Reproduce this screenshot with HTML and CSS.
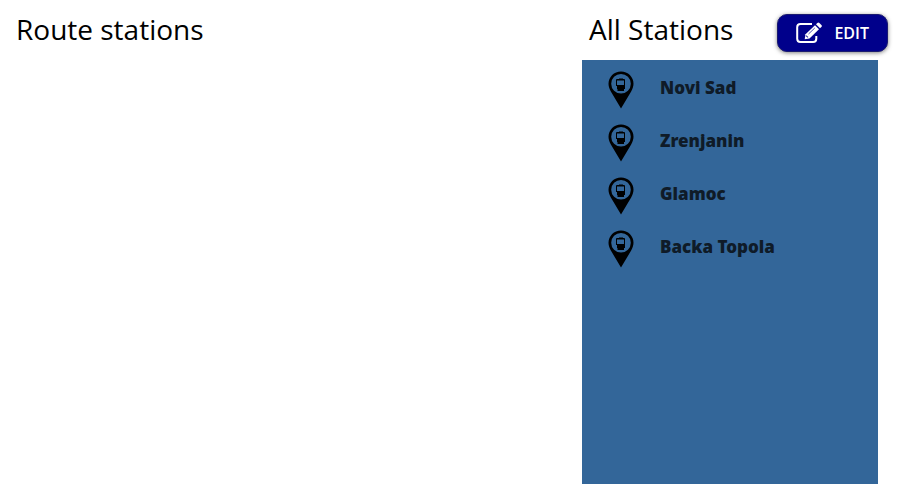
FILE: index.html
```html
<!DOCTYPE html>
<html lang="en">
<head>
<meta charset="utf-8">
<title>Route stations</title>
<link rel="stylesheet" href="styles.css">
</head>
<body>
<svg class="sprite" aria-hidden="true">
  <symbol id="pin" viewBox="0 0 26 38">
    <path fill-rule="evenodd" d="M13 0.5C6 .5.5 6 .5 12.8c0 3 1 5.200 2.500 8L13 37.500l10-16.700c1.500-2.800 2.500-5 2.500-8C25.500 6 20 .5 13 .5zM13 3a9.800 9.800 0 1 1 0 19.600A9.800 9.800 0 0 1 13 3z"/>
    <path d="M11 7h4v.5h-4z"/>
    <path fill-rule="evenodd" d="M9 8h7q1 0 1 1v6H8V9q0-1 1-1zM9 9.500V14h7V9.500z"/>
    <path d="M9 15h8v3h-1v2H9.500v-2H9z"/>
  </symbol>
</svg>
<main class="page">
  <section class="route">
    <h1 class="title">Route stations</h1>
  </section>
  <section class="all">
    <header class="bar">
      <h1 class="title">All Stations</h1>
      <button class="edit" type="button">
        <svg class="edit-icon" viewBox="0 0 26 22" aria-hidden="true">
          <path d="M16 2H4.500Q1.200 2 1.200 5.200v11.600Q1.200 20 4.500 20h12.600q3.200 0 3.200-3.200V14" fill="none" stroke="#fff" stroke-width="2"/>
          <path d="M9.500 12.200 19 3.200l4 4-9.500 9.200-4.800.8z" fill="#fff"/>
          <path d="M20 2.300l1.400-1.400q1-.9 2 0l2 2q.9 1 0 2L24 6.300z" fill="#fff"/>
          <path d="M12.500 12 18.800 6M10.300 13.300v1.200h1.300v1.200" fill="none" stroke="#00008b" stroke-width=".7"/>
        </svg>
        <span>EDIT</span>
      </button>
    </header>
    <ul class="stations">
      <li class="station"><svg class="pin" aria-hidden="true"><use href="#pin"/></svg><span>Novi Sad</span></li>
      <li class="station"><svg class="pin" aria-hidden="true"><use href="#pin"/></svg><span>Zrenjanin</span></li>
      <li class="station"><svg class="pin" aria-hidden="true"><use href="#pin"/></svg><span>Glamoc</span></li>
      <li class="station"><svg class="pin" aria-hidden="true"><use href="#pin"/></svg><span>Backa Topola</span></li>
    </ul>
  </section>
</main>
</body>
</html>
```
FILE: styles.css
```css
* {
  box-sizing: border-box;
}

body {
  margin: 0;
  background: #fff;
  color: #000;
  font-family: "Segoe UI", "Open Sans", "Noto Sans", sans-serif;
}

.sprite {
  display: none;
}

.page {
  display: flex;
  min-height: 100vh;
  padding: 8px 13px 14px 16px;
}

.route {
  flex: 1;
}

.all {
  display: flex;
  flex-direction: column;
  width: 306px;
}

.title {
  margin: 0;
  font-size: 28px;
  font-weight: 400;
  line-height: 42px;
}

.bar {
  display: flex;
  justify-content: space-between;
  height: 52px;
  padding-left: 7px;
}

.edit {
  display: flex;
  align-items: center;
  gap: 12px;
  height: 38px;
  margin-top: 6px;
  padding: 0 18px;
  border: 1px solid #1a1a70;
  border-radius: 10px;
  background: #00008b;
  box-shadow: 0 1px 4px rgba(0, 0, 0, 0.5);
  color: #fff;
  font-family: inherit;
  font-size: 16px;
  font-weight: 600;
}

.edit-icon {
  width: 26px;
  height: 22px;
}

.stations {
  flex: 1;
  width: 296px;
  margin: 0;
  padding: 1px 0 0;
  background: #336699;
  list-style: none;
}

.station {
  display: flex;
  align-items: center;
  gap: 26px;
  height: 53px;
  padding: 4px 26px 0;
  color: #0f1b28;
  font-family: "Segoe UI", "Noto Sans", "Open Sans", sans-serif;
  font-size: 17px;
  font-weight: 900;
  line-height: 24px;
}

.station span {
  padding-bottom: 4px;
}

.pin {
  width: 26px;
  height: 38px;
}
```
